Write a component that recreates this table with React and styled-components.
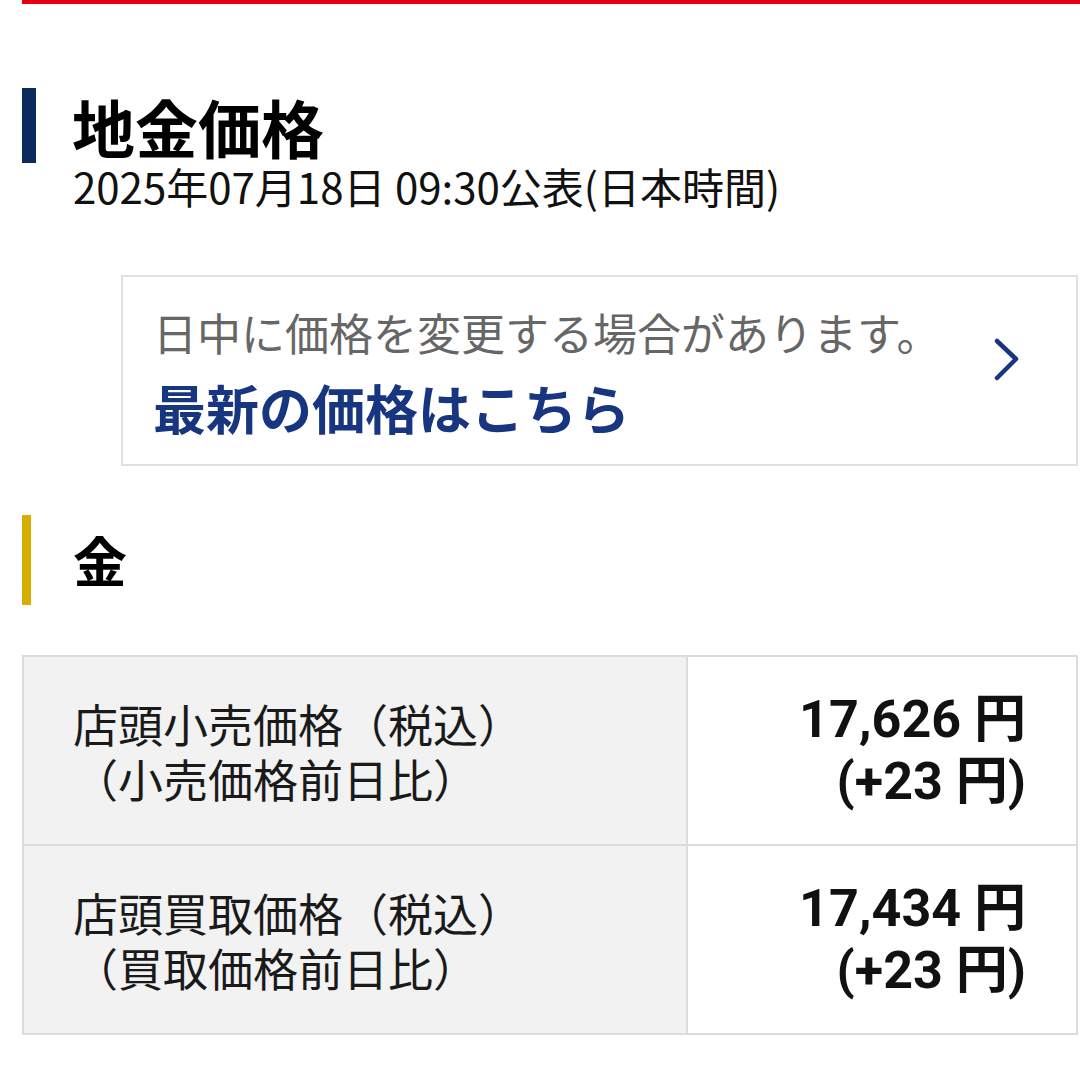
import React from 'react';
import styled, { createGlobalStyle } from 'styled-components';

const GlobalStyle = createGlobalStyle`
  html, body {
    margin: 0;
    padding: 0;
    background: #ffffff;
  }
  body {
    font-family: "Noto Sans CJK JP", "Noto Sans", sans-serif;
    color: #111;
  }
`;

const Page = styled.div`
  width: 1080px;
  height: 1080px;
  overflow: hidden;
  padding-left: 22px;
  box-sizing: border-box;
`;

const TopBar = styled.div`
  height: 4px;
  background: #e60012;
  margin-right: -2px;
`;

const Heading = styled.div`
  display: flex;
  align-items: stretch;
  margin-top: ${p => p.$top}px;
`;

const HeadingMark = styled.div`
  width: ${p => p.$width}px;
  background: ${p => p.$color};
  flex-shrink: 0;
`;

const HeadingText = styled.h1`
  margin: 0 0 0 ${p => p.$gap}px;
  font-size: ${p => p.$size}px;
  line-height: ${p => p.$lh}px;
  font-weight: 700;
  color: #000;
`;

const DateLine = styled.div`
  margin-left: 51px;
  font-size: 42px;
  line-height: 46px;
  color: #111;
`;

const NoticeBox = styled.a`
  display: flex;
  align-items: center;
  justify-content: space-between;
  margin: 66px 2px 0 99px;
  padding: 24px 54px 24px 30px;
  border: 2px solid #e0e0e0;
  text-decoration: none;
  box-sizing: border-box;
  height: 191px;
`;

const NoticeText = styled.div`
  display: flex;
  flex-direction: column;
`;

const NoticeNote = styled.span`
  font-size: 44px;
  line-height: 56px;
  color: #666;
`;

const NoticeLink = styled.span`
  margin-top: 16px;
  font-size: 53px;
  line-height: 62px;
  font-weight: 700;
  color: #17367f;
`;

const ChevronWrap = styled.span`
  display: flex;
  margin-bottom: 22px;
`;

const Chevron = () => (
  <ChevronWrap>
    <svg width="30" height="44" viewBox="0 0 30 44" fill="none">
      <path d="M5 3 L24 21 L5 40" stroke="#17367f" strokeWidth="4.5" strokeLinecap="round" strokeLinejoin="round" />
    </svg>
  </ChevronWrap>
);

const PriceTable = styled.table`
  margin-top: 50px;
  width: 1056px;
  border-collapse: collapse;
  border: 2px solid #dcdcdc;
`;

const LabelCell = styled.td`
  width: 613px;
  height: 187px;
  padding: 0 0 0 49px;
  background: #f2f2f2;
  border: 2px solid #dcdcdc;
  font-size: 45px;
  line-height: 55px;
  color: #1a1a1a;
  vertical-align: middle;
`;

const ValueCell = styled.td`
  padding: 0 50px 0 0;
  background: #fff;
  border: 2px solid #dcdcdc;
  text-align: right;
  font-family: "Roboto", "Noto Sans CJK JP", sans-serif;
  font-size: 52px;
  line-height: 62px;
  font-weight: 700;
  color: #111;
  vertical-align: middle;
`;

const Line = styled.div`
  white-space: nowrap;
`;

const rows = [
  { label: '店頭小売価格（税込）', sub: '（小売価格前日比）', price: '17,626', diff: '+23' },
  { label: '店頭買取価格（税込）', sub: '（買取価格前日比）', price: '17,434', diff: '+23' },
];

const App = () => {
  return (
    <Page>
      <GlobalStyle />
      <TopBar />
      <Heading $top={84}>
        <HeadingMark $width={14} $color="#0c2a5e" />
        <HeadingText $gap={36} $size={63} $lh={75}>地金価格</HeadingText>
      </Heading>
      <DateLine>2025年07月18日 09:30公表(日本時間)</DateLine>

      <NoticeBox href="#">
        <NoticeText>
          <NoticeNote>日中に価格を変更する場合があります。</NoticeNote>
          <NoticeLink>最新の価格はこちら</NoticeLink>
        </NoticeText>
        <Chevron />
      </NoticeBox>

      <Heading $top={49}>
        <HeadingMark $width={9} $color="#d6ad00" />
        <HeadingText $gap={42} $size={54} $lh={90}>金</HeadingText>
      </Heading>

      <PriceTable>
        <tbody>
          {rows.map(r => (
            <tr key={r.label}>
              <LabelCell>
                <Line>{r.label}</Line>
                <Line>{r.sub}</Line>
              </LabelCell>
              <ValueCell>
                <Line>{r.price} 円</Line>
                <Line>({r.diff} 円)</Line>
              </ValueCell>
            </tr>
          ))}
        </tbody>
      </PriceTable>
    </Page>
  );
};

export default App;
